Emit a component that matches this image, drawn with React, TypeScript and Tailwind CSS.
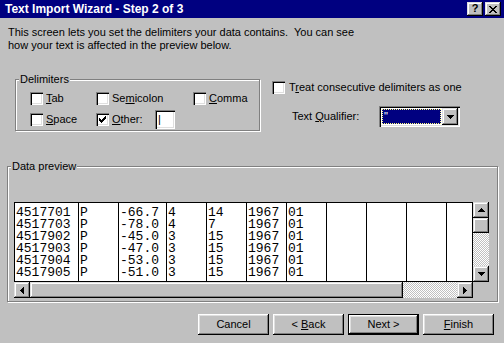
import React from "react";

const raised =
  "shadow-[inset_-1px_-1px_0_#000,inset_1px_1px_0_#fff,inset_-2px_-2px_0_#808080,inset_2px_2px_0_#dfdfdf]";
const raisedSb =
  "shadow-[inset_-1px_-1px_0_#000,inset_1px_1px_0_#dfdfdf,inset_-2px_-2px_0_#808080,inset_2px_2px_0_#fff]";
const sunken =
  "shadow-[inset_1px_1px_0_#808080,inset_2px_2px_0_#000,inset_-1px_-1px_0_#fff,inset_-2px_-2px_0_#dfdfdf]";
const checker =
  "[background:repeating-conic-gradient(#c0c0c0_0%_25%,#ffffff_0%_50%)_0_0/2px_2px]";

function Check({ checked }: { checked?: boolean }) {
  return (
    <span className={`relative inline-block w-[13px] h-[13px] bg-white shrink-0 ${sunken}`}>
      {checked && (
        <svg
          className="absolute left-[3px] top-[3px]"
          width="7"
          height="7"
          viewBox="0 0 7 7"
          shapeRendering="crispEdges"
        >
          <rect x="6" y="0" width="1" height="1" />
          <rect x="5" y="1" width="2" height="1" />
          <rect x="0" y="2" width="1" height="1" />
          <rect x="4" y="2" width="3" height="1" />
          <rect x="0" y="3" width="2" height="1" />
          <rect x="3" y="3" width="3" height="1" />
          <rect x="0" y="4" width="5" height="1" />
          <rect x="1" y="5" width="3" height="1" />
          <rect x="2" y="6" width="1" height="1" />
        </svg>
      )}
    </span>
  );
}

function Up() {
  return (
    <svg width="7" height="4" viewBox="0 0 7 4" shapeRendering="crispEdges">
      <path d="M3 0h1v1h1v1h1v1h1v1H0V3h1V2h1V1h1z" />
    </svg>
  );
}
function Down() {
  return (
    <svg width="7" height="4" viewBox="0 0 7 4" shapeRendering="crispEdges">
      <path d="M0 0h7v1h-1v1h-1v1h-1v1h-1v-1h-1v-1h-1v-1h-1z" />
    </svg>
  );
}
function Left() {
  return (
    <svg width="4" height="7" viewBox="0 0 4 7" shapeRendering="crispEdges">
      <path d="M3 0h1v7h-1v-1h-1v-1h-1v-1h-1v-1h1v-1h1v-1h1z" />
    </svg>
  );
}
function Right() {
  return (
    <svg width="4" height="7" viewBox="0 0 4 7" shapeRendering="crispEdges">
      <path d="M0 0h1v1h1v1h1v1h1v1h-1v1h-1v1h-1v1h-1z" />
    </svg>
  );
}

function SbBtn({ children }: { children: React.ReactNode }) {
  return (
    <div className={`w-[16px] h-[16px] bg-[#c0c0c0] flex items-center justify-center shrink-0 ${raisedSb}`}>
      {children}
    </div>
  );
}

function Button({ children, def }: { children: React.ReactNode; def?: boolean }) {
  return (
    <div className={`w-[71px] h-[21px] bg-[#c0c0c0] ${def ? "border border-black" : ""} flex`}>
      <div className={`flex-1 flex items-center justify-center ${raised}`}>
        <span className="whitespace-pre">{children}</span>
      </div>
    </div>
  );
}

const rows = [
  ["4517701", "P", "-66.7", "4", "14", "1967", "01"],
  ["4517703", "P", "-78.0", "4", "7", "1967", "01"],
  ["4517902", "P", "-45.0", "3", "15", "1967", "01"],
  ["4517903", "P", "-47.0", "3", "15", "1967", "01"],
  ["4517904", "P", "-53.0", "3", "15", "1967", "01"],
  ["4517905", "P", "-51.0", "3", "15", "1967", "01"],
];
const colWidths = [64, 40, 48, 40, 40, 40, 40, 40, 40, 40, 25];

export default function App() {
  return (
    <div className="w-[504px] h-[343px] bg-[#c0c0c0] overflow-hidden text-[11px] text-black font-['Liberation_Sans',Arial,sans-serif]">
      {/* Title bar */}
      <div className="h-[18px] bg-[#000080] flex items-center pl-[5px] pr-[3px]">
        <span className="flex-1 text-white font-bold text-[12px] leading-[18px]">
          Text Import Wizard - Step 2 of 3
        </span>
        <div className="flex gap-[2px]">
          <div className={`w-[16px] h-[14px] bg-[#c0c0c0] flex items-center justify-center ${raisedSb}`}>
            <span className="font-bold text-[11px] leading-[11px] mt-[-1px]">?</span>
          </div>
          <div className={`w-[16px] h-[14px] bg-[#c0c0c0] flex items-center justify-center ${raisedSb}`}>
            <svg width="8" height="7" viewBox="0 0 8 7" shapeRendering="crispEdges">
              <path d="M0 0h2v1h1v1h2V1h1V0h2v1H7v1H6v1H5v1h1v1h1v1h1v1H6V6H5V5H3v1H2v1H0V6h1V5h1V4h1V3H2V2H1V1H0z" />
            </svg>
          </div>
        </div>
      </div>

      {/* Description */}
      <div className="mt-[8px] ml-[8px] leading-[13px] whitespace-pre">
        {"This screen lets you set the delimiters your data contains.  You can see\nhow your text is affected in the preview below."}
      </div>

      {/* Middle row */}
      <div className="flex mt-[27px]">
        <div className="relative ml-[15px] w-[245px] h-[52px] border border-[#808080] shadow-[inset_1px_1px_0_#fff,1px_1px_0_#fff]">
          <span className="absolute left-[3px] top-[-7px] leading-[13px] px-[1px] bg-[#c0c0c0]">
            Delimiters
          </span>
          <div className="pt-[12px] pl-[14px] grid grid-cols-[66px_97px_auto] gap-y-[8px]">
            <div className="flex items-center gap-[3px] h-[13px]">
              <Check />
              <span>
                <span className="underline">T</span>ab
              </span>
            </div>
            <div className="flex items-center gap-[3px] h-[13px]">
              <Check />
              <span>
                Se<span className="underline">m</span>icolon
              </span>
            </div>
            <div className="flex items-center gap-[3px] h-[13px]">
              <Check />
              <span>
                <span className="underline">C</span>omma
              </span>
            </div>
            <div className="flex items-center gap-[3px] h-[13px]">
              <Check />
              <span>
                <span className="underline">S</span>pace
              </span>
            </div>
            <div className="col-span-2 flex items-center gap-[3px] h-[13px]">
              <Check checked />
              <span className="w-[40px]">
                <span className="underline">O</span>ther:
              </span>
              <div className={`w-[20px] h-[19px] bg-white shrink-0 pl-[3px] flex items-center ${sunken}`}>
                <span className="leading-[13px]">|</span>
              </div>
            </div>
          </div>
        </div>

        <div className="ml-[12px] mt-[2px]">
          <div className="flex items-center gap-[4px] h-[13px]">
            <Check />
            <span>
              T<span className="underline">r</span>eat consecutive delimiters as one
            </span>
          </div>
          <div className="flex items-center mt-[12px] ml-[20px]">
            <span className="w-[87px]">
              Text <span className="underline">Q</span>ualifier:
            </span>
            <div className={`w-[81px] h-[21px] bg-white p-[2px] flex ${sunken}`}>
              <div className="flex-1 p-[1px]">
                <div className="h-full bg-[#000080] border border-dotted border-[#ffff80] text-white leading-[13px] pl-[1px]">
                  "
                </div>
              </div>
              <div className={`w-[16px] h-[17px] bg-[#c0c0c0] flex items-center justify-center ${raisedSb}`}>
                <Down />
              </div>
            </div>
          </div>
        </div>
      </div>

      {/* Data preview */}
      <div className="relative mt-[35px] ml-[7px] w-[491px] h-[136px] border border-[#808080] shadow-[inset_1px_1px_0_#fff,1px_1px_0_#fff] pt-[35px] pl-[6px]">
        <span className="absolute left-[3px] top-[-7px] leading-[13px] px-[1px] bg-[#c0c0c0]">
          Data preview
        </span>
        <div className="flex flex-col">
          <div className="flex">
            <div className="w-[459px] h-[80px] bg-white border border-black flex overflow-hidden font-['Liberation_Mono','Courier_New',monospace] text-[13px] leading-[12px]">
              {colWidths.map((w, ci) => (
                <div
                  key={ci}
                  style={{ width: w }}
                  className={`h-full shrink-0 pt-[4px] pl-[1px] whitespace-pre overflow-hidden ${
                    ci < colWidths.length - 1 ? "border-r border-black" : ""
                  }`}
                >
                  {rows.map((r, ri) => (
                    <div key={ri} className="h-[12px]">
                      {r[ci] ?? ""}
                    </div>
                  ))}
                </div>
              ))}
            </div>
            <div className="w-[16px] h-[80px] flex flex-col">
              <SbBtn>
                <Up />
              </SbBtn>
              <div className={`w-[16px] h-[15px] bg-[#c0c0c0] ${raisedSb}`} />
              <div className={`flex-1 ${checker}`} />
              <SbBtn>
                <Down />
              </SbBtn>
            </div>
          </div>
          <div className="flex">
            <div className="w-[459px] h-[16px] flex">
              <SbBtn>
                <Left />
              </SbBtn>
              <div className={`w-[373px] h-[16px] bg-[#c0c0c0] ${raisedSb}`} />
              <div className={`flex-1 ${checker}`} />
              <SbBtn>
                <Right />
              </SbBtn>
            </div>
            <div className="w-[16px] h-[16px] bg-[#c0c0c0]" />
          </div>
        </div>
      </div>

      {/* Buttons */}
      <div className="flex justify-end gap-[4px] pr-[10px] mt-[12px]">
        <Button>Cancel</Button>
        <Button>
          {"< "}
          <span className="underline">B</span>ack
        </Button>
        <Button def>Next &gt;</Button>
        <Button>
          <span className="underline">F</span>inish
        </Button>
      </div>
    </div>
  );
}
